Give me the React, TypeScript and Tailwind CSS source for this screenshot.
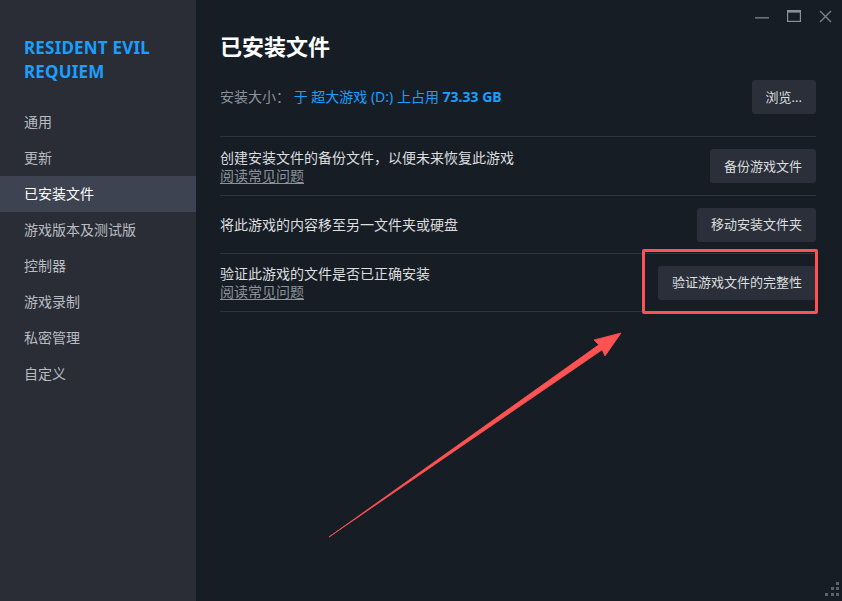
import React from "react";

const FONT = "font-['Noto_Sans','Noto_Sans_CJK_SC',sans-serif]";

const navItems = ["通用", "更新", "已安装文件", "游戏版本及测试版", "控制器", "游戏录制", "私密管理", "自定义"];

function ActionButton({ label }: { label: string }) {
  return (
    <button className="h-[34px] px-[14px] rounded-[3px] bg-[#2a2f39] text-[13px] text-[#dcdedf] leading-none whitespace-nowrap">
      {label}
    </button>
  );
}

function Row({ title, faq, button, className }: { title: string; faq?: boolean; button: string; className: string }) {
  return (
    <div className={`flex items-center justify-between border-t border-[#2e333d] ${className}`}>
      <div className="flex flex-col gap-px text-[14px] leading-[17px]">
        <span className="text-[#dcdedf]">{title}</span>
        {faq && <span className="text-[#8b929a] underline underline-offset-2">阅读常见问题</span>}
      </div>
      <ActionButton label={button} />
    </div>
  );
}

function WindowControls() {
  return (
    <div className="flex h-8 items-center justify-end gap-[18px] pr-[10px]">
      <svg width="14" height="14" viewBox="0 0 14 14" className="mt-[2px]">
        <rect x="0" y="7" width="14" height="1.6" fill="#6b7079" />
      </svg>
      <svg width="14" height="12" viewBox="0 0 14 12">
        <rect x="0.6" y="0.6" width="12.8" height="10.8" fill="none" stroke="#8b8f96" strokeWidth="1.2" />
        <rect x="0" y="0" width="14" height="2.6" fill="#8b8f96" />
      </svg>
      <svg width="13" height="13" viewBox="0 0 13 13">
        <path d="M1 1 L12 12 M12 1 L1 12" stroke="#7c8189" strokeWidth="1.4" />
      </svg>
    </div>
  );
}

export default function App() {
  return (
    <div className={`relative flex h-[601px] w-[842px] overflow-hidden bg-[#171d25] ${FONT}`}>
      <aside className="flex w-[196px] shrink-0 flex-col bg-[#2a2d35] pt-9">
        <div className="px-6 text-[17px] font-bold leading-[24px] tracking-[0.2px] text-[#1a9fff]">
          RESIDENT EVIL
          <br />
          REQUIEM
        </div>
        <nav className="mt-5 flex flex-col">
          {navItems.map((item) => (
            <div
              key={item}
              className={`flex h-9 items-center px-6 pb-[2px] text-[14px] ${
                item === "已安装文件" ? "bg-[#3d4350] text-white" : "text-[#b8bcc2]"
              }`}
            >
              {item}
            </div>
          ))}
        </nav>
      </aside>

      <main className="flex flex-1 flex-col">
        <WindowControls />
        <div className="flex flex-col pl-6 pr-[26px]">
          <h1 className="text-[22px] font-bold leading-[28px] text-white">已安装文件</h1>

          <div className="mt-5 flex items-center justify-between">
            <div className="pb-[2px] text-[14px]">
              <span className="text-[#8b929a]">安装大小：</span>
              <span className="text-[#1a9fff]">
                {" "}于 超大游戏 (D:) 上占用 <span className="font-bold">73.33 GB</span>
              </span>
            </div>
            <ActionButton label="浏览..." />
          </div>

          <div className="mt-[22px] flex flex-col border-b border-[#2e333d]">
            <Row className="h-[59px]" title="创建安装文件的备份文件，以便未来恢复此游戏" faq button="备份游戏文件" />
            <Row className="h-[58px]" title="将此游戏的内容移至另一文件夹或硬盘" button="移动安装文件夹" />
            <Row className="h-[58px]" title="验证此游戏的文件是否已正确安装" faq button="验证游戏文件的完整性" />
          </div>
        </div>
      </main>

      {/* annotation: highlight box */}
      <div className="absolute left-[642px] top-[249px] h-[65px] w-[176px] rounded-[2px] border-[3px] border-[#ff5252]" />

      {/* annotation: arrow */}
      <svg className="pointer-events-none absolute left-0 top-0" width="842" height="601">
        <polygon
          points="329,537 598.8,344.8 594,340 621,333 605,356 602.2,349.8"
          fill="#ff5252"
          stroke="#ff5252"
          strokeWidth="0.8"
          strokeLinejoin="round"
        />
      </svg>

      {/* resize grip */}
      <svg className="absolute bottom-0 right-0" width="20" height="20" viewBox="0 0 20 20">
        <rect x="14" y="1" width="3" height="3" fill="#5c616b" />
        <rect x="9" y="6" width="3" height="3" fill="#5c616b" />
        <rect x="14" y="6" width="3" height="3" fill="#5c616b" />
        <rect x="3" y="12" width="3" height="3" fill="#5c616b" />
        <rect x="9" y="12" width="3" height="3" fill="#5c616b" />
        <rect x="14" y="12" width="3" height="3" fill="#5c616b" />
      </svg>
    </div>
  );
}
